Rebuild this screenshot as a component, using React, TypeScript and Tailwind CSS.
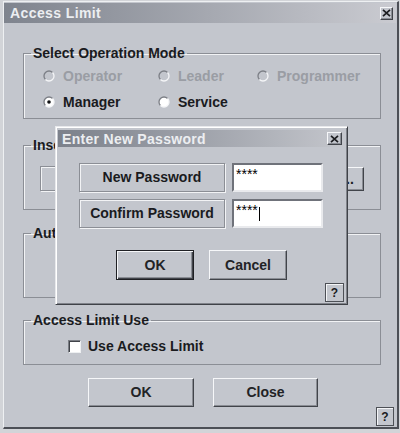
import React from 'react'

const FONT = "font-['Liberation_Sans',Arial,sans-serif]"

const RAISED =
  'bg-[#c3c6cd] border border-t-[#f6f7f9] border-l-[#f6f7f9] border-r-[#41444a] border-b-[#41444a] shadow-[inset_-1px_-1px_0_#8a8d94]'

function CloseBox({ w }: { w: string }) {
  return (
    <div className={`${w} h-[13px] flex items-center justify-center ${RAISED}`}>
      <svg width="9" height="8" viewBox="0 0 9 8">
        <path d="M1 0.8L8 7.2M8 0.8L1 7.2" stroke="#1c1d20" strokeWidth="1.7" />
      </svg>
    </div>
  )
}

function Radio({ label, checked, disabled }: { label: string; checked?: boolean; disabled?: boolean }) {
  return (
    <div className="flex items-center gap-[8px]">
      <svg width="12" height="12" viewBox="0 0 12 12" className="shrink-0">
        <circle cx="6" cy="6" r="5" fill={disabled ? '#c3c6cd' : '#ffffff'} />
        <path d="M2.46 9.54A5 5 0 0 1 9.54 2.46" stroke="#7c7f86" strokeWidth="1.3" fill="none" />
        <path d="M9.54 2.46A5 5 0 0 1 2.46 9.54" stroke="#f4f5f7" strokeWidth="1.3" fill="none" />
        {checked && <circle cx="6" cy="6" r="1.8" fill="#111214" />}
      </svg>
      <span className={`text-[14px] leading-[16px] font-bold ${disabled ? 'text-[#9a9da4]' : 'text-[#1a1b1e]'}`}>
        {label}
      </span>
    </div>
  )
}

function Group({ title, className, children }: { title: string; className: string; children?: React.ReactNode }) {
  return (
    <fieldset
      className={`ml-[19px] w-[358px] border border-[#8b8e95] shadow-[inset_1px_1px_0_#f2f3f5] ${className}`}
    >
      <legend className="ml-[7px] px-[2px] text-[14px] leading-[16px] font-bold text-[#1a1b1e]">{title}</legend>
      {children}
    </fieldset>
  )
}

function HelpBox({ w, h }: { w: string; h: string }) {
  return (
    <div
      className={`${w} ${h} flex items-center justify-center bg-[#c3c6cd] border border-[#4d5056] shadow-[inset_1px_1px_0_#f4f5f7] text-[12px] font-bold text-[#1a1b1e]`}
    >
      ?
    </div>
  )
}

function PasswordInput({ cursor }: { cursor?: boolean }) {
  return (
    <div className="h-[29px] bg-white border-2 border-t-[#6f727a] border-l-[#6f727a] border-r-[#e9eaed] border-b-[#e9eaed] flex items-start pt-[2px] pl-[2px]">
      <span className="text-[14px] leading-[14px] text-black">****</span>
      {cursor && <span className="mt-[4px] ml-[1px] w-[1px] h-[14px] bg-black" />}
    </div>
  )
}

export default function App() {
  return (
    <div className={`relative w-[400px] h-[433px] overflow-hidden bg-[#d2d4d8] pl-[3px] pt-[1px] ${FONT}`}>
      <div className="w-[396px] h-[428px] flex flex-col bg-[#c3c6cd] border-l border-t border-l-[#eef0f2] border-t-[#eef0f2] border-r-2 border-b-2 border-r-[#4c4f56] border-b-[#4c4f56]">
        <div className="mt-[1px] mr-[1px] h-[20px] shrink-0 flex items-center justify-between pl-[6px] pr-[3px] bg-linear-to-r from-[#7f848e] to-[#cacbd1]">
          <span className="text-[14px] leading-[16px] font-bold tracking-[0.4px] text-[#eceef1]">Access Limit</span>
          <CloseBox w="w-[13px]" />
        </div>

        <Group title="Select Operation Mode" className="mt-[22px] h-[74px]">
          <div className="pt-[7px] pl-[19px] grid grid-cols-[115px_99px_auto] gap-y-[10px]">
            <Radio label="Operator" disabled />
            <Radio label="Leader" disabled />
            <Radio label="Programmer" disabled />
            <Radio label="Manager" checked />
            <Radio label="Service" />
          </div>
        </Group>

        <Group title="Insert Password" className="mt-[18px] h-[73px]">
          <div className="pt-[13px] pl-[16px] flex gap-[6px]">
            <div className="w-[286px] h-[25px] border border-[#8b8e95] shadow-[inset_1px_1px_0_#f2f3f5,1px_1px_0_#f2f3f5]" />
            <div className={`w-[32px] h-[24px] mt-[1px] flex items-center justify-center text-[14px] font-bold text-[#1a1b1e] ${RAISED}`}>
              ...
            </div>
          </div>
        </Group>

        <Group title="Authority Setting" className="mt-[15px] h-[73px]" />

        <Group title="Access Limit Use" className="mt-[14px] h-[53px]">
          <div className="pt-[10px] pl-[44px] flex items-center gap-[7px]">
            <div className="w-[13px] h-[13px] bg-white border border-t-[#7a7d84] border-l-[#7a7d84] border-r-[#eef0f2] border-b-[#eef0f2] shadow-[inset_1px_1px_0_#404349]" />
            <span className="text-[14px] leading-[16px] font-bold text-[#1a1b1e]">Use Access Limit</span>
          </div>
        </Group>

        <div className="mt-[13px] ml-[84px] flex gap-[19px]">
          <button className={`w-[106px] h-[29px] text-[14px] font-bold text-[#222326] ${RAISED}`}>OK</button>
          <button className={`w-[105px] h-[29px] text-[14px] font-bold text-[#222326] ${RAISED}`}>Close</button>
        </div>

        <div className="flex justify-end pr-[3px]">
          <HelpBox w="w-[18px]" h="h-[19px]" />
        </div>
      </div>

      <div className="absolute left-[55px] top-[126px] w-[293px] h-[179px] flex flex-col bg-[#c3c6cd] border border-t-[#e8e9ec] border-l-[#e8e9ec] border-r-[#3f4248] border-b-[#3f4248] shadow-[inset_1px_1px_0_#ffffff,inset_-1px_-1px_0_#80838a]">
        <div className="mt-[3px] mx-[2px] h-[17px] flex items-center justify-between pl-[4px] pr-[3px] bg-linear-to-r from-[#7c818b] to-[#c4c6cc]">
          <span className="text-[14px] leading-[16px] font-bold tracking-[0.3px] text-[#eceef1]">Enter New Password</span>
          <CloseBox w="w-[15px]" />
        </div>

        <div className="mt-[16px] ml-[23px] grid grid-cols-[146px_91px] gap-x-[7px] gap-y-[7px]">
          <div className="h-[29px] flex items-center justify-center border border-[#8b8e95] shadow-[inset_1px_1px_0_#f2f3f5,1px_1px_0_#f2f3f5] text-[14px] font-bold text-[#1a1b1e]">
            New Password
          </div>
          <PasswordInput />
          <div className="h-[29px] flex items-center justify-center border border-[#8b8e95] shadow-[inset_1px_1px_0_#f2f3f5,1px_1px_0_#f2f3f5] text-[14px] font-bold text-[#1a1b1e]">
            Confirm Password
          </div>
          <PasswordInput cursor />
        </div>

        <div className="mt-[22px] ml-[60px] flex gap-[15px]">
          <button className="w-[78px] h-[30px] bg-[#c3c6cd] border border-[#1f2024] shadow-[inset_1px_1px_0_#f6f7f9,inset_-1px_-1px_0_#41444a,inset_-2px_-2px_0_#8a8d94] text-[14px] font-bold text-[#222326]">
            OK
          </button>
          <button className={`w-[78px] h-[30px] text-[14px] font-bold text-[#222326] ${RAISED}`}>Cancel</button>
        </div>

        <div className="mt-[3px] mr-[3px] flex justify-end">
          <HelpBox w="w-[19px]" h="h-[19px]" />
        </div>
      </div>
    </div>
  )
}
